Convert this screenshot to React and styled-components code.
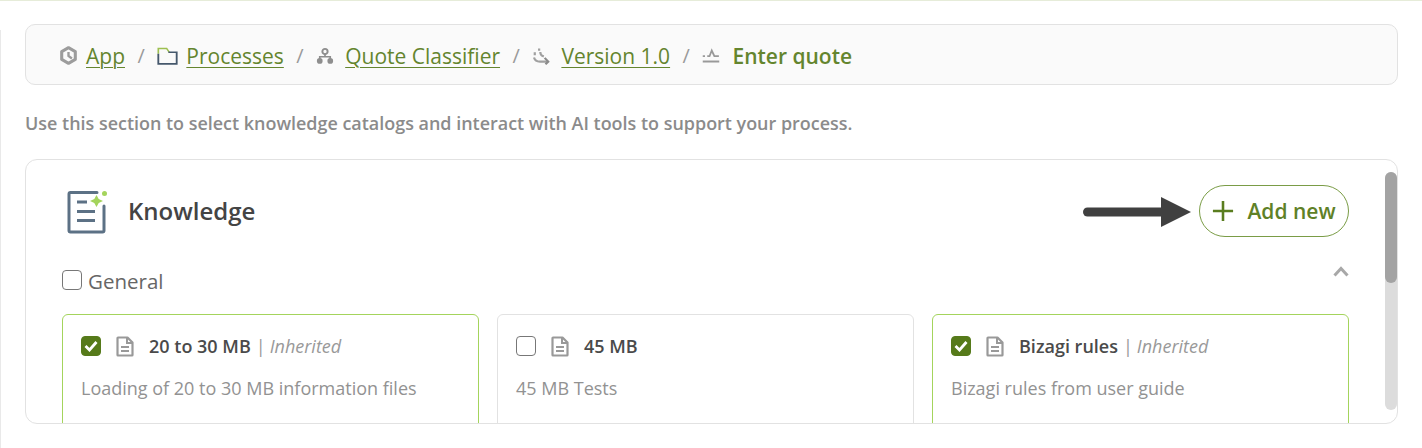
import React from 'react';
import styled, { createGlobalStyle } from 'styled-components';

const GlobalStyle = createGlobalStyle`
  html, body {
    margin: 0;
    padding: 0;
    background: #fff;
    font-family: "Open Sans", "DejaVu Sans", sans-serif;
  }`

const Page = styled.div`
  position: relative;
  width: 1422px;
  height: 448px;
  box-sizing: border-box;
  overflow: hidden;
  display: flex;
  flex-direction: row;
  border-top: 1px solid #e6ecd9;`

const Rail = styled.div`
  width: 1px;
  margin-top: 29px;
  background: #e9e9e9;`

const Content = styled.div`
  flex: 1;
  display: flex;
  flex-direction: column;
  padding: 23px 24px 0 24px;`

const Breadcrumb = styled.nav`
  height: 61px;
  box-sizing: border-box;
  display: flex;
  align-items: center;
  padding: 2px 34px 0;
  background: #fafafa;
  border: 1px solid #e2e2e2;
  border-radius: 10px;
  font-size: 21px;`

const Crumb = styled.a`
  color: #64852e;
  text-decoration: underline;
  text-underline-offset: 3px;
  text-decoration-thickness: 1px;
  margin-left: ${p => p.$gap}px;`

const Current = styled.span`
  color: #64852e;
  font-weight: 600;
  margin-left: 12px;`

const Sep = styled.span`
  color: #9a9a9a;
  margin: 0 12.5px;
  font-size: 20px;`

const Hint = styled.p`
  margin: 28px 0 26px;
  height: 20px;
  line-height: 20px;
  font-size: 17.94px;
  font-weight: 600;
  color: #8b8b8b;`

const Panel = styled.section`
  position: relative;
  height: 265px;
  box-sizing: border-box;
  overflow: hidden;
  padding: 0 48px 0 36px;
  border: 1px solid #e2e2e2;
  border-radius: 12px;
  background: #fff;`

const PanelHead = styled.header`
  height: 104px;
  display: flex;
  align-items: center;
  padding-left: 5px;`

const PanelTitle = styled.h2`
  margin: 0 0 4px 21px;
  flex: 1;
  font-size: 24px;
  font-weight: 600;
  color: #444;`

const AddButton = styled.button`
  width: 150px;
  height: 52px;
  margin-bottom: 3px;
  display: flex;
  align-items: center;
  justify-content: center;
  gap: 13px;
  padding: 0;
  background: #fff;
  border: 1.5px solid #7a9c46;
  border-radius: 26px;
  color: #5f8127;
  font-family: inherit;
  font-size: 21px;
  font-weight: 600;`

const GroupRow = styled.div`
  height: 50px;
  display: flex;
  align-items: flex-start;
  justify-content: space-between;`

const GroupLabel = styled.label`
  display: flex;
  align-items: center;
  gap: 6px;
  font-size: 20.5px;
  line-height: 34px;
  color: #666;
  span {
    margin-bottom: 2px;
  }`

const Chevron = styled.span`
  display: flex;
  margin-top: 2px;`

const Cards = styled.div`
  display: grid;
  grid-template-columns: repeat(3, 1fr);
  gap: 18px;`

const Card = styled.article`
  height: 150px;
  box-sizing: border-box;
  padding: 17px 18px;
  border: 1px solid ${p => (p.$selected ? '#a4d45c' : '#e2e2e2')};
  border-radius: 6px;`

const CardHead = styled.div`
  height: 28px;
  display: flex;
  align-items: center;`

const CardName = styled.span`
  margin-left: 15px;
  font-size: 18px;
  font-weight: 600;
  color: #4a4a4a;`

const Inherited = styled.span`
  margin-left: 5px;
  font-size: 18px;
  color: #999;
  i {
    margin-left: 4px;
  }`

const CardText = styled.p`
  margin: 15px 0 0;
  font-size: 18px;
  line-height: 26px;
  color: #929292;`

const Box = styled.span`
  flex: none;
  width: 20px;
  height: 20px;
  box-sizing: border-box;
  display: flex;
  align-items: center;
  justify-content: center;
  border-radius: 4px;
  border: 1px solid ${p => (p.$checked ? '#567a1a' : '#777')};
  background: ${p => (p.$checked ? '#567a1a' : '#fff')};
  margin-right: ${p => p.$right || 0}px;`

const Track = styled.div`
  position: absolute;
  top: 12px;
  right: 0;
  width: 12px;
  height: 238px;
  background: #dcdcdc;
  border-radius: 6px;`

const Thumb = styled.div`
  height: 111px;
  background: #a3a3a3;
  border-radius: 6px;`

const Pointer = styled.svg`
  position: absolute;
  left: 1083px;
  top: 195px;`

const Icon = ({ children, w = 18, h = 18, box = '0 0 24 24' }) => (
  <svg width={w} height={h} viewBox={box} preserveAspectRatio="none" fill="none" style={{ flex: 'none' }}>
    {children}
  </svg>
)

const AppIcon = () => (
  <Icon w={17} h={19} box="2 1 20 22">
    <path d="M12 3l8 4.500v9L12 21l-8-4.500v-9z" stroke="#9c9c9c" strokeWidth="3.600" strokeLinejoin="round" />
    <path d="M12 8v4.500l4 3" stroke="#9c9c9c" strokeWidth="2.800" />
  </Icon>
)

const FolderIcon = () => (
  <Icon w={21} h={18}>
    <path d="M1.500 9V2h9.500l3 5" stroke="#9dbf50" strokeWidth="1.900" />
    <path d="M1.500 9v13.500h21V7H13" stroke="#45586c" strokeWidth="2.100" />
  </Icon>
)

const TreeIcon = () => (
  <Icon>
    <circle cx="12" cy="6" r="3.500" stroke="#8e8e8e" strokeWidth="2.600" />
    <circle cx="5" cy="18.500" r="3.800" fill="#8e8e8e" />
    <circle cx="19" cy="18.500" r="3.800" fill="#8e8e8e" />
    <path d="M12 9v4M5 16v-3h14v3" stroke="#8e8e8e" strokeWidth="2.200" />
  </Icon>
)

const VersionIcon = () => (
  <Icon w={19} h={18}>
    <path d="M9 2v3M3.500 7v4M2.500 14c1 3.500 4 5.500 7.500 5.500h9" stroke="#a0a0a0" strokeWidth="2.800" />
    <path d="M10.500 6.500c0 2.500 1 5 4.500 6" stroke="#a0a0a0" strokeWidth="2.800" />
    <path d="M16 14.500l4.500 5-3.500 3.500" stroke="#8a8a8a" strokeWidth="2.800" />
  </Icon>
)

const StepIcon = () => (
  <Icon h={17}>
    <path d="M1 13h3M7 13h3l3-8 3.500 8h6" stroke="#999" strokeWidth="2.400" />
    <path d="M1 20.500h22" stroke="#999" strokeWidth="2.800" />
  </Icon>
)

const KnowledgeIcon = () => (
  <svg width="40" height="44" viewBox="0 0 40 44" fill="none" style={{ flex: 'none' }}>
    <path d="M30 2.500H3.500a1.500 1.500 0 0 0-1.500 1.500v36.500A1.500 1.500 0 0 0 3.500 42h32a1.500 1.500 0 0 0 1.500-1.500V16" stroke="#5c7185" strokeWidth="3" strokeLinecap="round" />
    <path d="M10 12h10M10 21.500h18M10 30.500h18" stroke="#5c7185" strokeWidth="3" />
    <path d="M29.500 5l2.200 4 4.300 2-4.300 2-2.200 4-2.200-4-4.300-2 4.300-2z" fill="#a4d45c" />
    <circle cx="37.500" cy="3.500" r="2.500" fill="#a4d45c" />
  </svg>
)

const PlusIcon = () => (
  <Icon w={22} h={22}>
    <path d="M12 1v22M1 12h22" stroke="#5a7d1f" strokeWidth="2.800" />
  </Icon>
)

const DocIcon = () => (
  <Icon w={18} h={21} box="0 0 18 21">
    <path d="M2 1.500h9.500l5 5v12.500a.5.5 0 0 1-.5.5H2a.5.5 0 0 1-.5-.5V2a.5.5 0 0 1 .5-.5z" stroke="#999" strokeWidth="2.200" strokeLinejoin="round" />
    <path d="M11 2v5h5M5 11h8M5 15h8" stroke="#999" strokeWidth="2" />
  </Icon>
)

const CheckBox = ({ checked, right }) => (
  <Box $checked={checked} $right={right}>
    {checked && (
      <svg width="14" height="12" viewBox="0 0 14 12" fill="none">
        <path d="M1.500 6l4 4 7-8" stroke="#fff" strokeWidth="2.800" />
      </svg>
    )}
  </Box>
)

const KnowledgeCard = ({ name, text, selected }) => (
  <Card $selected={selected}>
    <CardHead>
      <CheckBox checked={selected} right={15} />
      <DocIcon />
      <CardName>{name}</CardName>
      {selected && <Inherited>|<i>Inherited</i></Inherited>}
    </CardHead>
    <CardText>{text}</CardText>
  </Card>
)

const App = () => {
  return (
    <Page>
      <GlobalStyle />
      <Rail />
      <Content>
        <Breadcrumb>
          <AppIcon />
          <Crumb href="#" $gap={9}>App</Crumb>
          <Sep>/</Sep>
          <FolderIcon />
          <Crumb href="#" $gap={8}>Processes</Crumb>
          <Sep>/</Sep>
          <TreeIcon />
          <Crumb href="#" $gap={11}>Quote Classifier</Crumb>
          <Sep>/</Sep>
          <VersionIcon />
          <Crumb href="#" $gap={10}>Version 1.0</Crumb>
          <Sep>/</Sep>
          <StepIcon />
          <Current>Enter quote</Current>
        </Breadcrumb>
        <Hint>Use this section to select knowledge catalogs and interact with AI tools to support your process.</Hint>
        <Panel>
          <PanelHead>
            <KnowledgeIcon />
            <PanelTitle>Knowledge</PanelTitle>
            <AddButton><PlusIcon />Add new</AddButton>
          </PanelHead>
          <GroupRow>
            <GroupLabel><CheckBox />General</GroupLabel>
            <Chevron>
              <svg width="16" height="11" viewBox="0 0 16 11" fill="none">
                <path d="M1.500 9.500l6.500-7 6.500 7" stroke="#a8a8a8" strokeWidth="3" />
              </svg>
            </Chevron>
          </GroupRow>
          <Cards>
            <KnowledgeCard selected name="20 to 30 MB" text="Loading of 20 to 30 MB information files" />
            <KnowledgeCard name="45 MB" text="45 MB Tests" />
            <KnowledgeCard selected name="Bizagi rules" text="Bizagi rules from user guide" />
          </Cards>
          <Track><Thumb /></Track>
        </Panel>
      </Content>
      <Pointer width="108" height="32" viewBox="0 0 108 32">
        <path d="M4.500 16h75" stroke="#404040" strokeWidth="9" strokeLinecap="round" />
        <path d="M78 1l30 15-30 15z" fill="#404040" />
      </Pointer>
    </Page>
  )
}

export default App;
